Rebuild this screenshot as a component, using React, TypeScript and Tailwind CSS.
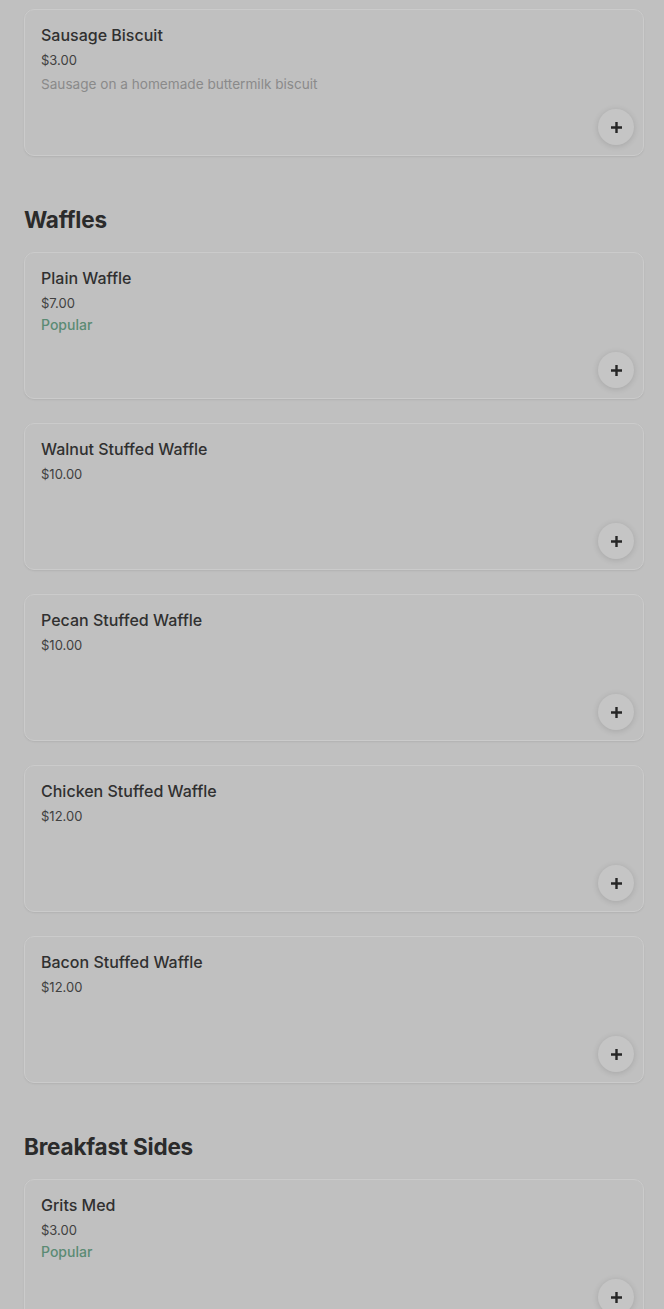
import React from "react";

type Item = { name: string; price: string; desc?: string; popular?: boolean };

const Plus = () => (
  <svg width="13" height="13" viewBox="0 0 13 13" fill="none">
    <path d="M6.5 1v11M1 6.5h11" stroke="#262626" strokeWidth="2.4" />
  </svg>
);

const Card = ({ item }: { item: Item }) => (
  <div className="flex h-[147px] justify-between rounded-[10px] border border-[#cbcbcb] bg-[#c0c0c0] shadow-[0_1px_2px_rgba(0,0,0,0.08)]">
    <div className="flex flex-col pl-4 pt-[15px]">
      <div className="text-[16px] leading-5 font-medium text-[#303030]">{item.name}</div>
      <div className="mt-[5px] text-[13px] leading-5 text-[#404040]">{item.price}</div>
      {item.desc && (
        <div className="mt-[4px] text-[13.6px] leading-5 text-[#8a8a8a]">{item.desc}</div>
      )}
      {item.popular && (
        <div className="mt-[2px] text-[14px] leading-5 font-medium text-[#5b8b74]">Popular</div>
      )}
    </div>
    <div className="flex items-end pb-[10px] pr-[9px]">
      <div className="flex h-9 w-9 items-center justify-center rounded-full bg-[#c5c5c5] shadow-[0_1px_6px_rgba(0,0,0,0.14)]">
        <Plus />
      </div>
    </div>
  </div>
);

const Heading = ({ children }: { children: React.ReactNode }) => (
  <h2 className="mt-12 mb-4 text-[22.5px] leading-8 font-bold tracking-[-0.2px] text-[#2b2b2b]">{children}</h2>
);

export default function App() {
  const waffles: Item[] = [
    { name: "Plain Waffle", price: "$7.00", popular: true },
    { name: "Walnut Stuffed Waffle", price: "$10.00" },
    { name: "Pecan Stuffed Waffle", price: "$10.00" },
    { name: "Chicken Stuffed Waffle", price: "$12.00" },
    { name: "Bacon Stuffed Waffle", price: "$12.00" },
  ];
  return (
    <div
      className="min-h-[1309px] w-[664px] overflow-hidden bg-[#c0c0c0] pl-6 pr-5 pt-[9px]"
      style={{ fontFamily: "Inter, 'Noto Sans', sans-serif" }}
    >
      <Card item={{ name: "Sausage Biscuit", price: "$3.00", desc: "Sausage on a homemade buttermilk biscuit" }} />
      <Heading>Waffles</Heading>
      <div className="flex flex-col gap-6">
        {waffles.map((w) => (
          <Card key={w.name} item={w} />
        ))}
      </div>
      <Heading>Breakfast Sides</Heading>
      <Card item={{ name: "Grits Med", price: "$3.00", popular: true }} />
    </div>
  );
}
